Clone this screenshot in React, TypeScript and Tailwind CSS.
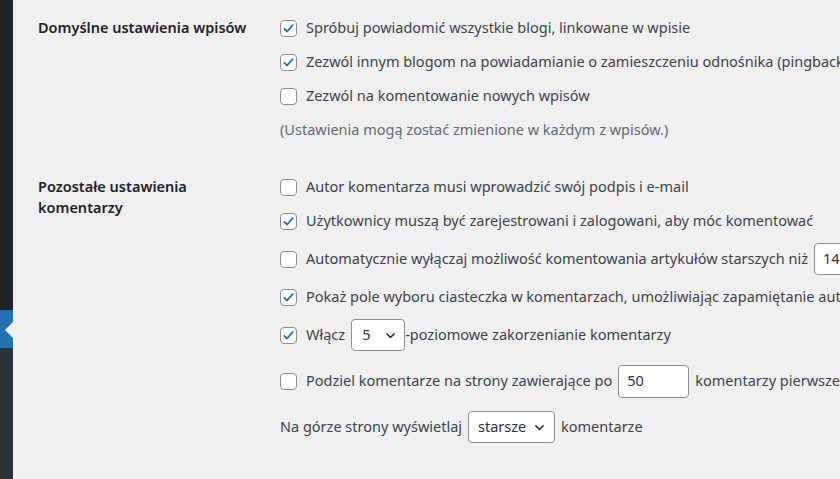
import { ReactNode } from 'react';

function Check({ checked }: { checked?: boolean }) {
  return (
    <span className="w-[17px] h-[17px] shrink-0 rounded-[4px] border border-[#8c8f94] bg-white flex items-center justify-center">
      {checked && (
        <svg viewBox="0 0 20 20" className="w-[15px] h-[15px]">
          <path d="M4.5 10.5 L8.2 14 L15.5 5.5" fill="none" stroke="#2271b1" strokeWidth="2.4" strokeLinecap="round" strokeLinejoin="round" />
        </svg>
      )}
    </span>
  );
}

function Chevron() {
  return (
    <svg viewBox="0 0 16 16" className="w-[13px] h-[13px]">
      <path d="M3.5 6 L8 10.5 L12.5 6" fill="none" stroke="#2c3338" strokeWidth="1.8" strokeLinecap="round" strokeLinejoin="round" />
    </svg>
  );
}

function Row({ h, children }: { h: string; children: ReactNode }) {
  return <div className={`flex items-center whitespace-nowrap ${h}`}>{children}</div>;
}

function Opt({ checked, children }: { checked?: boolean; children: ReactNode }) {
  return (
    <div className="flex items-center">
      <Check checked={checked} />
      <span className="ml-[9px]">{children}</span>
    </div>
  );
}

export default function App() {
  return (
    <div
      className="w-[840px] h-[479px] overflow-hidden flex bg-[#f0f0f1] text-[#3c434a] text-[14.5px]"
      style={{ fontFamily: '"Noto Sans", "Open Sans", sans-serif' }}
    >
      {/* menu boczne */}
      <div className="w-[13px] shrink-0 flex flex-col">
        <div className="h-[310px] bg-[#1d2327]" />
        <div className="h-[38px] bg-[#2271b1] relative">
          <span className="absolute right-0 top-[12px] w-0 h-0 border-y-[8px] border-y-transparent border-r-[8px] border-r-[#f0f0f1]" />
        </div>
        <div className="flex-1 bg-[#2c3338]" />
      </div>

      <div className="flex-1 flex flex-col pt-[11px]">
        {/* Domyślne ustawienia wpisów */}
        <div className="flex">
          <div className="w-[267px] shrink-0 pl-[25px] h-[34px] flex items-center text-[#1d2327] font-semibold">
            Domyślne ustawienia wpisów
          </div>
          <div className="flex flex-col">
            <Row h="h-[34px]">
              <Opt checked>Spróbuj powiadomić wszystkie blogi, linkowane w wpisie</Opt>
            </Row>
            <Row h="h-[34px]">
              <Opt checked>Zezwól innym blogom na powiadamianie o zamieszczeniu odnośnika (pingbacki i trackbacki)</Opt>
            </Row>
            <Row h="h-[34px]">
              <Opt>Zezwól na komentowanie nowych wpisów</Opt>
            </Row>
            <Row h="h-[34px]">
              <span className="text-[#646970]">(Ustawienia mogą zostać zmienione w każdym z wpisów.)</span>
            </Row>
          </div>
        </div>

        {/* Pozostałe ustawienia komentarzy */}
        <div className="flex mt-[23px]">
          <div className="w-[267px] shrink-0 pl-[25px] pt-[6px] text-[#1d2327] font-semibold leading-[21px]">
            <div className="w-[205px]">Pozostałe ustawienia komentarzy</div>
          </div>
          <div className="flex flex-col">
            <Row h="h-[34px]">
              <Opt>Autor komentarza musi wprowadzić swój podpis i e-mail</Opt>
            </Row>
            <Row h="h-[34px]">
              <Opt checked>Użytkownicy muszą być zarejestrowani i zalogowani, aby móc komentować</Opt>
            </Row>
            <Row h="h-[42px]">
              <Opt>Automatycznie wyłączaj możliwość komentowania artykułów starszych niż</Opt>
              <span className="ml-[6px] w-[60px] h-[32px] rounded-[4px] border border-[#8c8f94] bg-white flex items-center px-[8px] text-[#2c3338]">
                14
              </span>
              <span className="ml-[6px]">dni</span>
            </Row>
            <Row h="h-[34px]">
              <Opt checked>Pokaż pole wyboru ciasteczka w komentarzach, umożliwiając zapamiętanie autora</Opt>
            </Row>
            <Row h="h-[42px]">
              <Opt checked>Włącz</Opt>
              <span className="ml-[6px] w-[54px] h-[32px] rounded-[4px] border border-[#8c8f94] bg-white flex items-center justify-between pl-[10px] pr-[7px] text-[#2c3338]">
                5
                <Chevron />
              </span>
              <span>-poziomowe zakorzenianie komentarzy</span>
            </Row>
            <Row h="h-[50px]">
              <Opt>Podziel komentarze na strony zawierające po</Opt>
              <span className="ml-[6px] w-[71px] h-[33px] rounded-[4px] border border-[#8c8f94] bg-white flex items-center px-[8px] text-[#2c3338]">
                50
              </span>
              <span className="ml-[6px]">komentarzy pierwszego poziomu</span>
            </Row>
            <Row h="h-[42px]">
              <span>Na górze strony wyświetlaj</span>
              <span className="ml-[6px] w-[87px] h-[32px] rounded-[4px] border border-[#8c8f94] bg-white flex items-center justify-between pl-[9px] pr-[8px] text-[#2c3338]">
                starsze
                <Chevron />
              </span>
              <span className="ml-[6px]">komentarze</span>
            </Row>
          </div>
        </div>
      </div>
    </div>
  );
}
